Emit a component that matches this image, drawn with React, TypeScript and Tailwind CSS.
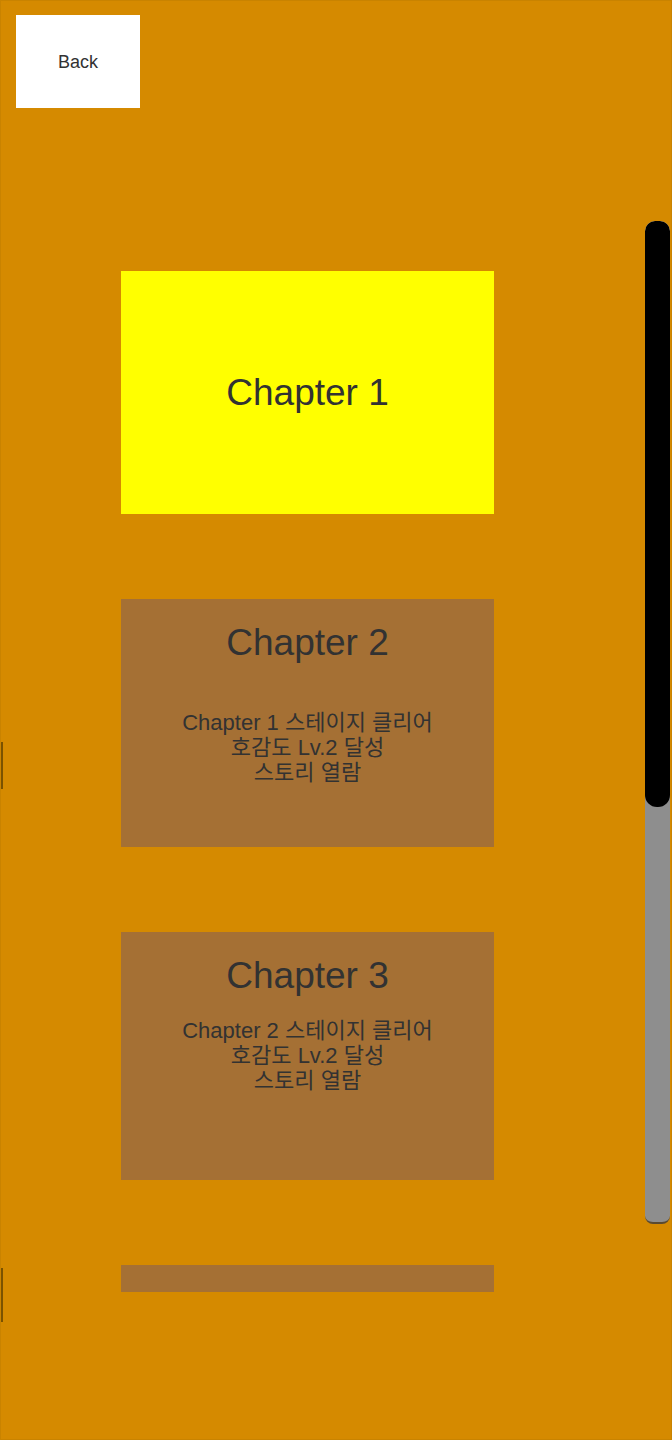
import React from "react";

const font = { fontFamily: '"Liberation Sans", Arial, "Noto Sans CJK KR", sans-serif' };

function Sub({ lines }: { lines: string[] }) {
  return (
    <div className="flex flex-col items-center text-[22px] leading-[25px] text-[#323232]">
      {lines.map((l) => (
        <div key={l}>{l}</div>
      ))}
    </div>
  );
}

export default function App() {
  return (
    <div
      className="relative w-[672px] h-[1440px] bg-[#d58a00] overflow-hidden border border-[#c98300]"
      style={font}
    >
      <div className="pt-[14px] pl-[15px]">
        <div className="w-[124px] h-[93px] bg-white flex items-center justify-center pt-[2px] text-[18px] text-[#323232]">
          Back
        </div>
      </div>

      <div className="ml-[120px] mt-[163px] w-[373px] flex flex-col gap-[85px]">
        <div className="h-[243px] bg-[#ffff00] flex items-center justify-center text-[37px] leading-[40px] text-[#323232]">
          Chapter 1
        </div>

        <div className="h-[248px] bg-[#a57034] flex flex-col items-center pt-[24px]">
          <div className="text-[37px] leading-[40px] text-[#323232]">Chapter 2</div>
          <div className="mt-[47px]">
            <Sub lines={["Chapter 1 스테이지 클리어", "호감도 Lv.2 달성", "스토리 열람"]} />
          </div>
        </div>

        <div className="h-[248px] bg-[#a57034] flex flex-col items-center pt-[24px]">
          <div className="text-[37px] leading-[40px] text-[#323232]">Chapter 3</div>
          <div className="mt-[22px]">
            <Sub lines={["Chapter 2 스테이지 클리어", "호감도 Lv.2 달성", "스토리 열람"]} />
          </div>
        </div>

        <div className="h-[27px] bg-[#a57034]" />
      </div>

      {/* scrollbar */}
      <div className="absolute left-[644px] top-[220px] w-[25px] h-[1003px] rounded-t-[10px] rounded-b-[8px] bg-[#8e8e8e] border-b-2 border-[#5a4a30] overflow-hidden">
        <div className="h-[586px] bg-black rounded-t-[10px] rounded-b-[12px]" />
      </div>

      {/* left edge marks */}
      <div className="absolute left-0 top-[741px] w-[2px] h-[47px] bg-[#7a5200]" />
      <div className="absolute left-0 top-[1267px] w-[2px] h-[54px] bg-[#7a5200]" />
    </div>
  );
}
